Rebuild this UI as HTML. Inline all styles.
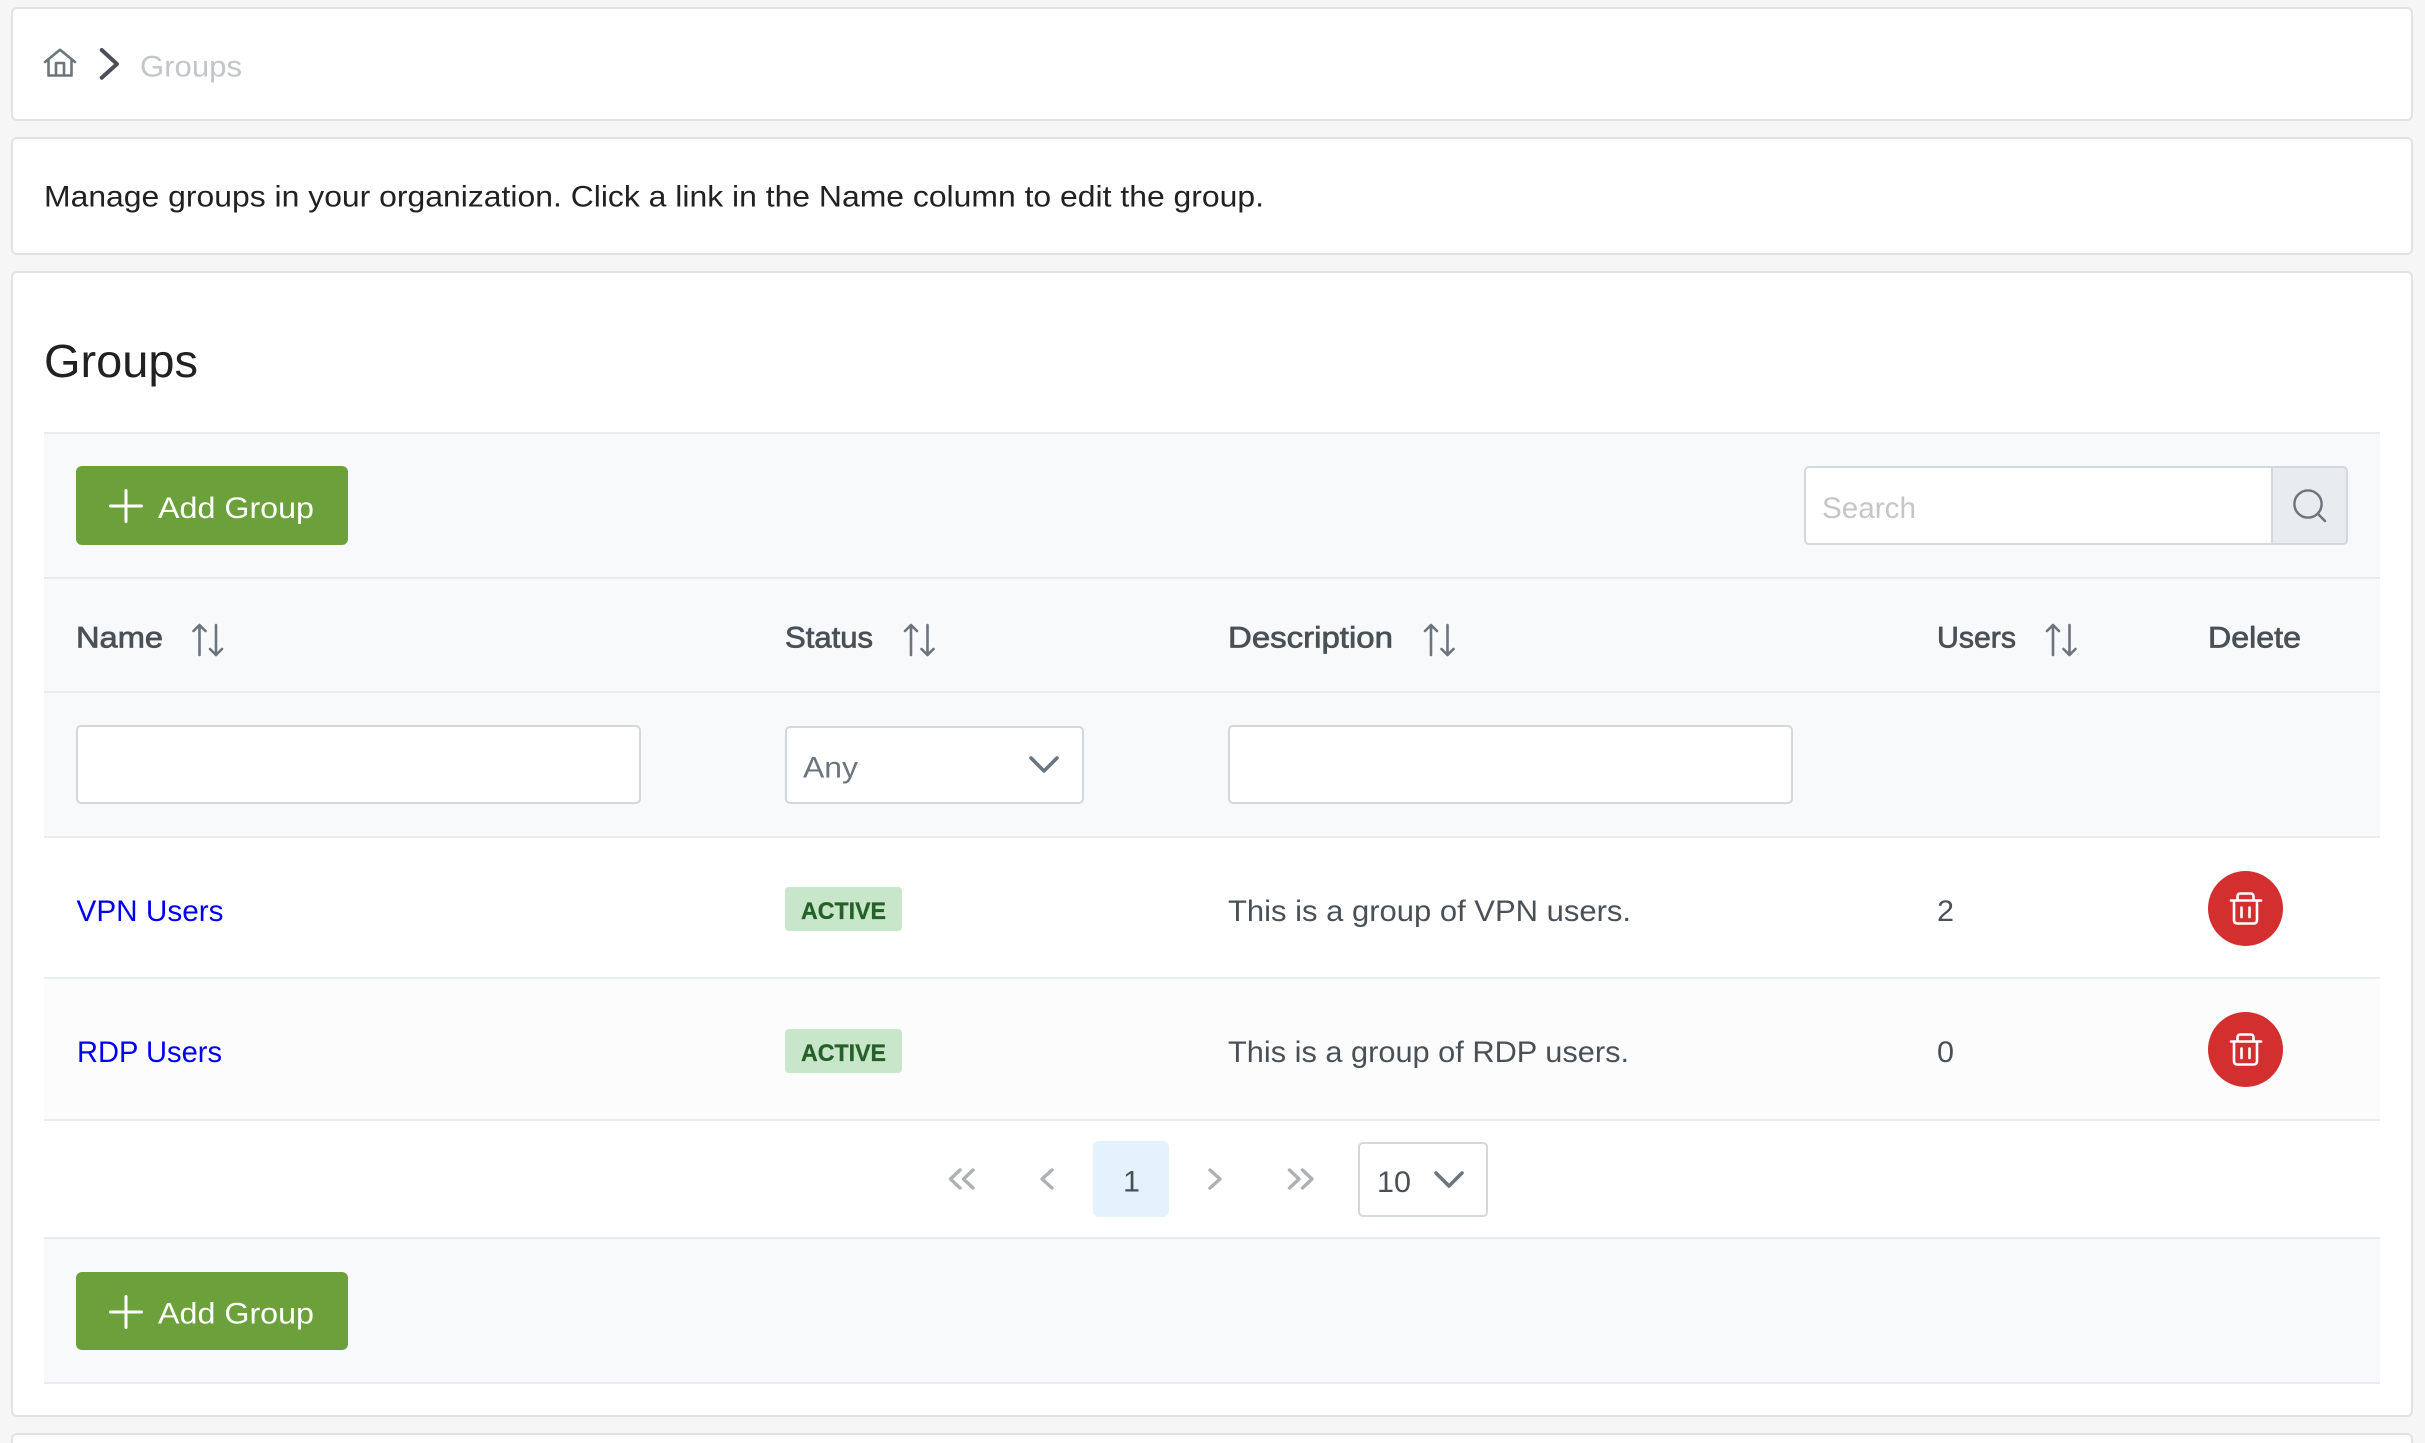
<!DOCTYPE html>
<html lang="en">
<head>
<meta charset="utf-8">
<title>Groups</title>
<style>
html,body{margin:0;padding:0;width:2425px;height:1443px;overflow:hidden;background:#f6f6f6}
.b{position:absolute;box-sizing:border-box}
.card{background:#fff;border:2px solid #e2e2e2;border-radius:6px;left:11px;width:2402px}
.bar{left:44px;width:2336px;background:#f8f9fa}
.line{left:44px;width:2336px;height:2px;background:#e9ecef}
.inp{background:#fff;border:2px solid #d3d8de;border-radius:5px}
.btn{left:76px;width:272px;background:#6ba03a;border-radius:6px}
.badge{left:785px;width:117px;height:44px;background:#c8e6c9;border-radius:4px}
svg{position:absolute;left:0;top:0}
text{font-family:"Liberation Sans",sans-serif;font-size:30px}
.h{fill:#495057;stroke:#495057;stroke-width:.75px}
.t{fill:#495057}
.a{fill:#0000ee}
.w{fill:#fff}
.act{fill:#256029;stroke:#256029;stroke-width:.3px;font-size:24px;font-weight:bold}
.ic{fill:none;stroke:#6c757d;stroke-width:2.6;stroke-linecap:round;stroke-linejoin:round}
.tr{fill:none;stroke:#fff;stroke-width:2.6;stroke-linecap:round;stroke-linejoin:round}
.pg{fill:none;stroke:#adb1b4;stroke-width:3.4;stroke-linecap:round;stroke-linejoin:round}
</style>
</head>
<body>
<div class="b card" style="top:7px;height:114px"></div>
<div class="b card" style="top:137px;height:118px"></div>
<div class="b card" style="top:271px;height:1146px"></div>
<div class="b card" style="top:1433px;height:10px;border-bottom:0;border-radius:6px 6px 0 0"></div>

<div class="b bar" style="top:432px;height:406px"></div>
<div class="b" style="left:44px;width:2336px;top:838px;height:141px;background:#fff"></div>
<div class="b" style="left:44px;width:2336px;top:979px;height:141px;background:#fcfcfc"></div>
<div class="b bar" style="top:1238px;height:145px"></div>

<div class="b line" style="top:432px"></div>
<div class="b line" style="top:577px"></div>
<div class="b line" style="top:691px"></div>
<div class="b line" style="top:836px"></div>
<div class="b line" style="top:977px"></div>
<div class="b line" style="top:1119px"></div>
<div class="b line" style="top:1237px"></div>
<div class="b line" style="top:1382px"></div>

<div class="b btn" style="top:466px;height:79px"></div>
<div class="b btn" style="top:1272px;height:78px"></div>

<div class="b inp" style="left:1804px;top:466px;width:544px;height:79px"></div>
<div class="b" style="left:2271px;top:466px;width:77px;height:79px;background:#e9ecef;border:2px solid #d3d8de;border-radius:0 5px 5px 0"></div>

<div class="b inp" style="left:76px;top:725px;width:565px;height:79px"></div>
<div class="b inp" style="left:785px;top:726px;width:299px;height:78px"></div>
<div class="b inp" style="left:1228px;top:725px;width:565px;height:79px"></div>

<div class="b badge" style="top:887px"></div>
<div class="b badge" style="top:1029px"></div>

<div class="b" style="left:2208px;top:871px;width:75px;height:75px;border-radius:50%;background:#d32f2f"></div>
<div class="b" style="left:2208px;top:1012px;width:75px;height:75px;border-radius:50%;background:#d32f2f"></div>

<div class="b" style="left:1093px;top:1141px;width:76px;height:76px;border-radius:6px;background:#e3f2fd"></div>
<div class="b inp" style="left:1358px;top:1142px;width:130px;height:75px"></div>

<svg width="2425" height="1443" viewBox="0 0 2425 1443" xmlns="http://www.w3.org/2000/svg">
  <!-- breadcrumb -->
  <path class="ic" d="M45 62 L60 49.8 L75 62 M48.5 59.5 V75.5 H71.5 V59.5 M56 75 V63 H64 V75"/>
  <path d="M101.7 50 L117 64 L101.7 77.7" fill="none" stroke="#495057" stroke-width="4" stroke-linecap="round" stroke-linejoin="round"/>
  <text x="140" y="76.7" fill="#c2c5c9" textLength="102" lengthAdjust="spacingAndGlyphs">Groups</text>

  <text x="44" y="206.7" fill="#212121" textLength="1220" lengthAdjust="spacingAndGlyphs">Manage groups in your organization. Click a link in the Name column to edit the group.</text>

  <text x="44" y="377" fill="#212121" style="font-size:46px" textLength="154" lengthAdjust="spacingAndGlyphs">Groups</text>

  <!-- add buttons -->
  <path d="M110.5 506 H141.5 M126 490.5 V521.5" stroke="#fff" stroke-width="3" stroke-linecap="round" fill="none"/>
  <text class="w" x="158" y="518" textLength="156" lengthAdjust="spacingAndGlyphs">Add Group</text>
  <path d="M110.5 1312 H141.5 M126 1296.5 V1327.5" stroke="#fff" stroke-width="3" stroke-linecap="round" fill="none"/>
  <text class="w" x="158" y="1323.5" textLength="156" lengthAdjust="spacingAndGlyphs">Add Group</text>

  <!-- search -->
  <text x="1822" y="518" fill="#c6c6c6" textLength="94" lengthAdjust="spacingAndGlyphs">Search</text>
  <circle cx="2308" cy="504" r="13.6" fill="none" stroke="#6c757d" stroke-width="2.4"/>
  <path class="ic" d="M2318 514 L2325 521"/>

  <!-- headers -->
  <text class="h" x="76" y="647.5" textLength="87" lengthAdjust="spacingAndGlyphs">Name</text>
  <text class="h" x="785" y="647.5" textLength="88" lengthAdjust="spacingAndGlyphs">Status</text>
  <text class="h" x="1228" y="647.5" textLength="165" lengthAdjust="spacingAndGlyphs">Description</text>
  <text class="h" x="1937" y="647.5" textLength="79" lengthAdjust="spacingAndGlyphs">Users</text>
  <text class="h" x="2208" y="647.5" textLength="93" lengthAdjust="spacingAndGlyphs">Delete</text>

  <path class="ic" d="M199.5 625 V655 M193.5 631 L199.5 625 L205.5 631 M216 625 V655 M210 649 L216 655 L222 649"/>
  <path class="ic" d="M911 625 V655 M905 631 L911 625 L917 631 M927.5 625 V655 M921.5 649 L927.5 655 L933.5 649"/>
  <path class="ic" d="M1431 625 V655 M1425 631 L1431 625 L1437 631 M1447.5 625 V655 M1441.5 649 L1447.5 655 L1453.5 649"/>
  <path class="ic" d="M2053 625 V655 M2047 631 L2053 625 L2059 631 M2069.5 625 V655 M2063.5 649 L2069.5 655 L2075.5 649"/>

  <!-- filters -->
  <text x="803" y="777.5" fill="#6c757d" textLength="55" lengthAdjust="spacingAndGlyphs">Any</text>
  <path d="M1031 758 L1044 771 L1057 758" fill="none" stroke="#6c757d" stroke-width="3.6" stroke-linecap="round" stroke-linejoin="round"/>

  <!-- row 1 -->
  <text class="a" x="76.5" y="921" textLength="147" lengthAdjust="spacingAndGlyphs">VPN Users</text>
  <text class="act" x="801" y="919" textLength="85" lengthAdjust="spacingAndGlyphs">ACTIVE</text>
  <text class="t" x="1228" y="921" textLength="403" lengthAdjust="spacingAndGlyphs">This is a group of VPN users.</text>
  <text class="t" x="1937" y="921" textLength="17" lengthAdjust="spacingAndGlyphs">2</text>
  <path class="tr" d="M2231 900.5 H2261 M2237.5 900.5 V896.5 Q2237.5 893.5 2240.5 893.5 H2250.5 Q2253.5 893.5 2253.5 896.5 V900.5 M2234 900.5 V920 Q2234 923.5 2237.5 923.5 H2253.5 Q2257 923.5 2257 920 V900.5 M2241.5 907.5 V917 M2249.5 907.5 V917"/>

  <!-- row 2 -->
  <text class="a" x="77" y="1062" textLength="145" lengthAdjust="spacingAndGlyphs">RDP Users</text>
  <text class="act" x="801" y="1061" textLength="85" lengthAdjust="spacingAndGlyphs">ACTIVE</text>
  <text class="t" x="1228" y="1062" textLength="401" lengthAdjust="spacingAndGlyphs">This is a group of RDP users.</text>
  <text class="t" x="1937" y="1062" textLength="17" lengthAdjust="spacingAndGlyphs">0</text>
  <path class="tr" d="M2231 1041.5 H2261 M2237.5 1041.5 V1037.5 Q2237.5 1034.5 2240.5 1034.5 H2250.5 Q2253.5 1034.5 2253.5 1037.5 V1041.5 M2234 1041.5 V1061 Q2234 1064.5 2237.5 1064.5 H2253.5 Q2257 1064.5 2257 1061 V1041.5 M2241.5 1048.5 V1058 M2249.5 1048.5 V1058"/>

  <!-- pagination -->
  <path class="pg" d="M960 1170 L950.5 1179 L960 1188 M973 1170 L963.5 1179 L973 1188"/>
  <path class="pg" d="M1052 1170 L1042 1179 L1052 1188"/>
  <text class="t" x="1123" y="1191.5" textLength="17" lengthAdjust="spacingAndGlyphs">1</text>
  <path class="pg" d="M1210 1170 L1220 1179 L1210 1188"/>
  <path class="pg" d="M1289.5 1170 L1299 1179 L1289.5 1188 M1302.5 1170 L1312 1179 L1302.5 1188"/>
  <text class="t" x="1377" y="1192" textLength="34" lengthAdjust="spacingAndGlyphs">10</text>
  <path d="M1436 1173 L1449 1186 L1462 1173" fill="none" stroke="#6c757d" stroke-width="3.6" stroke-linecap="round" stroke-linejoin="round"/>
</svg>
</body>
</html>
